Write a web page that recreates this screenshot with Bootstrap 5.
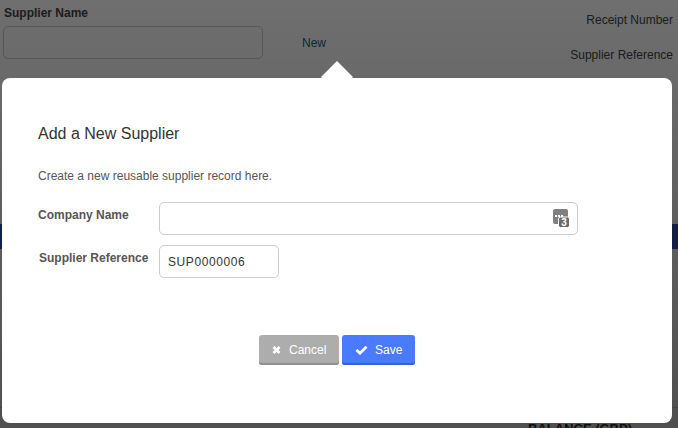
<!DOCTYPE html>
<html lang="en">
<head>
  <meta charset="UTF-8">
  <title>Add a New Supplier</title>
  <link href="https://cdn.jsdelivr.net/npm/bootstrap@5.3.2/dist/css/bootstrap.min.css" rel="stylesheet">
  <style>
    html, body { height: 100%; overflow: hidden; }
    body { font-family: "Liberation Sans", Arial, sans-serif; font-size: 12px; color: #333; background: #fff; }
    .page-back { height: 428px; padding: 5px 5px 0 3px; }
    .back-label { font-weight: 700; color: #444; line-height: 16px; padding-left: 1px; }
    .back-input { width: 260px; height: 33px; margin-top: 5px; border: 1px solid #ccc; border-radius: 5px; }
    .back-link { color: #2a5a8a; width: 63px; padding-top: 29px; }
    .back-side { line-height: 16px; color: #444; padding-top: 7px; gap: 19px; }
    .back-band { background: #3355bb; height: 25px; position: absolute; top: 224px; left: 0; right: 0; }
    .back-total { position: absolute; top: 419px; right: 46px; font-weight: 700; font-size: 13px; color: #333; }
    .back-rule { position: absolute; top: 407px; left: 0; right: 0; border-top: 1px solid #ddd; }
    .dimmer { position: fixed; inset: 0; background: linear-gradient(#00000090, #000000b0); }
    .supplier-modal { position: absolute; left: 2px; top: 78px; width: 670px; height: 345px; background: #fff; border-radius: 8px; padding: 47px 36px 0; }
    .supplier-modal::before { content: ""; position: absolute; left: 320px; top: -16px; width: 30px; height: 30px; background: #fff; transform: rotate(45deg) scale(.75); }
    .modal-heading { font-size: 16px; line-height: 18px; font-weight: 400; color: #333; margin: 0; }
    .modal-intro { color: #555; line-height: 14px; margin: 26px 0 0; }
    .field-row { display: flex; align-items: center; }
    .field-label { width: 121px; font-weight: 700; color: #555; flex: none; margin-bottom: 8px; }
    .field-input { height: 33px; padding: 0 8px; border: 1px solid #ccc; border-radius: 5px; font-size: 12px; color: #333; box-shadow: none; letter-spacing: .6px; }
    .input-wrap { position: relative; width: 419px; }
    .input-icon { position: absolute; right: 8px; top: 6px; }
    .ref-input { width: 120px; }
    .ref-label { padding-left: 1px; }
    .company-row { margin-top: 19px; }
    .ref-row { margin-top: 10px; }
    .button-row { margin-top: 57px; gap: 3px; }
    .btn-cancel, .btn-save { height: 30px; font-size: 12px; color: #fff; border: 0; border-radius: 3px; padding: 0 0 0 13px; display: inline-flex; align-items: center; gap: 8px; }
    .btn-cancel { width: 80px; background: #adadad; box-shadow: inset 0 -2px 0 #8f8f8f; }
    .btn-save { width: 73px; background: #4a7aff; box-shadow: inset 0 -2px 0 #3a62cc; gap: 7px; }
    .btn-cancel:hover { background: #adadad; color: #fff; }
    .btn-save:hover { background: #4a7aff; color: #fff; }
  </style>
</head>
<body>
  <div class="page-back">
    <div class="d-flex">
      <div>
        <div class="back-label">Supplier Name</div>
        <div class="back-input"></div>
      </div>
      <div class="back-link text-end">New</div>
      <div class="back-side ms-auto d-flex flex-column text-end">
        <div>Receipt Number</div>
        <div>Supplier Reference</div>
      </div>
    </div>
    <div class="back-band"></div>
    <div class="back-rule"></div>
    <div class="back-total">BALANCE (GBP)</div>
  </div>

  <div class="dimmer"></div>

  <div class="supplier-modal">
    <h5 class="modal-heading">Add a New Supplier</h5>
    <p class="modal-intro">Create a new reusable supplier record here.</p>

    <div class="field-row company-row">
      <label class="field-label" for="companyName">Company Name</label>
      <div class="input-wrap">
        <input type="text" id="companyName" class="form-control field-input">
        <svg class="input-icon" width="18" height="20" viewBox="0 0 18 20">
          <rect x="1" y="1" width="15" height="15" rx="2" fill="#808080"/>
          <g fill="#fff"><rect x="3" y="7" width="2" height="2"/><rect x="6" y="7" width="2" height="2"/><rect x="9" y="7" width="2" height="2"/></g>
          <rect x="6.5" y="9" width="11" height="10.5" rx="2" fill="#6a6a6a" stroke="#fff"/>
          <text x="12" y="18" text-anchor="middle" font-size="10" font-weight="700" fill="#fff" font-family="Liberation Sans">3</text>
        </svg>
      </div>
    </div>

    <div class="field-row ref-row">
      <label class="field-label ref-label" for="supplierRef">Supplier Reference</label>
      <input type="text" id="supplierRef" class="form-control field-input ref-input" value="SUP0000006">
    </div>

    <div class="d-flex justify-content-center button-row">
      <button type="button" class="btn btn-cancel">
        <svg width="9" height="10" viewBox="0 0 9 10"><path d="M1.5 2 7.5 8M7.5 2 1.5 8" stroke="#fff" stroke-width="2.8" fill="none"/></svg>
        Cancel
      </button>
      <button type="button" class="btn btn-save">
        <svg width="13" height="10" viewBox="0 0 13 10"><path d="M1.5 5 5 8.2 11.5 1.8" stroke="#fff" stroke-width="2.8" fill="none"/></svg>
        Save
      </button>
    </div>
  </div>
</body>
</html>
